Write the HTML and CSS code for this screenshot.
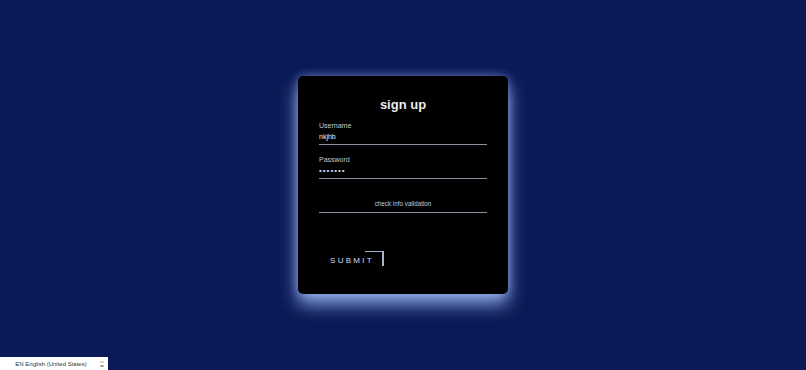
FILE: index.html
```html
<!DOCTYPE html>
<html lang="en">
<head>
<meta charset="utf-8">
<title>sign up</title>
<link rel="stylesheet" href="styles.css">
</head>
<body>
<main class="stage">
  <form class="card">
    <h1 class="title">sign up</h1>
    <div class="field">
      <div class="label">Username</div>
      <div class="value">nkjhb</div>
    </div>
    <div class="field field-pass">
      <div class="label">Password</div>
      <div class="value dots">•••••••</div>
    </div>
    <div class="check">check info validation</div>
    <div class="submit-row">
      <span class="submit">SUBMIT<span class="corner"></span></span>
    </div>
  </form>
</main>
<div class="langbar"><span class="lang">EN English (United States)</span><span class="arrows"><span>▭</span><span>◂▸</span></span></div>
</body>
</html>
```
FILE: styles.css
```css
html, body {
  margin: 0;
  height: 100%;
}
body {
  background: #0b1a56;
  font-family: "Liberation Sans", Arial, sans-serif;
  position: relative;
  overflow: hidden;
}
.stage {
  height: 370px;
  display: flex;
  align-items: center;
  justify-content: center;
}
.card {
  width: 210px;
  height: 218px;
  box-sizing: border-box;
  margin-top: -1px;
  padding: 21px 21px 0;
  background: #000;
  border-radius: 5px;
  box-shadow: 0 10px 18px rgba(165, 195, 255, 0.85), 0 0 10px rgba(120, 150, 230, 0.6);
  display: flex;
  flex-direction: column;
}
.title {
  margin: 0;
  font-size: 13px;
  line-height: 16px;
  font-weight: bold;
  text-align: center;
  color: #ececec;
}
.field {
  margin-top: 9px;
}
.field-pass {
  margin-top: 11px;
}
.label {
  font-size: 7px;
  line-height: 8px;
  color: #c2c8d6;
}
.value {
  margin-top: 3px;
  font-size: 7px;
  line-height: 8px;
  color: #e6ebf5;
  padding-bottom: 3px;
  border-bottom: 1px solid #8a90a0;
}
.dots {
  color: #c9d7ff;
  font-size: 8px;
  padding-bottom: 3px;
  margin-top: 3px;
  letter-spacing: 1px;
}
.check {
  margin-top: 21px;
  font-size: 6.3px;
  line-height: 8px;
  text-align: center;
  color: #c3cad8;
  padding-bottom: 4px;
  border-bottom: 1px solid #8a90a0;
}
.submit-row {
  margin-top: 36px;
  padding-left: 11px;
}
.submit {
  position: relative;
  display: inline-block;
  font-size: 8px;
  line-height: 10px;
  letter-spacing: 2.3px;
  color: #d8def0;
}
.corner {
  position: absolute;
  left: 35px;
  top: -5px;
  width: 17px;
  height: 14px;
  border-top: 1px solid #aab4cc;
  border-right: 2px solid #aab4cc;
}
.langbar {
  position: absolute;
  left: 0;
  bottom: 0;
  width: 108px;
  height: 13px;
  background: #fff;
  display: flex;
  align-items: center;
  font-size: 6px;
  color: #333;
}
.lang {
  flex: 1;
  text-align: center;
  padding-left: 2px;
}
.arrows {
  width: 8px;
  display: flex;
  flex-direction: column;
  font-size: 4px;
  line-height: 4px;
  color: #666;
}
```
